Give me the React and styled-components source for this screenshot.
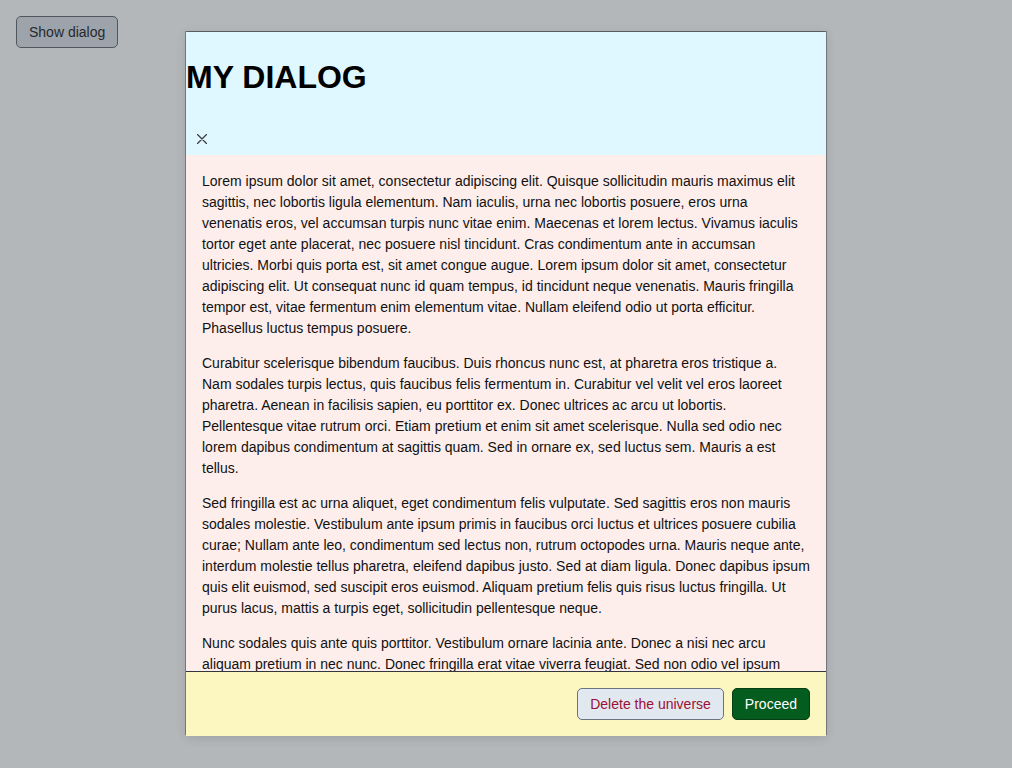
import styled, { createGlobalStyle } from "styled-components";

const GlobalStyle = createGlobalStyle`
  html, body {
    margin: 0;
    padding: 0;
    height: 100%;
  }
  body {
    font-family: "Liberation Sans", Arial, sans-serif;
    background: #b4b7ba;
  }
`;

const paragraphs = [
  "Lorem ipsum dolor sit amet, consectetur adipiscing elit. Quisque sollicitudin mauris maximus elit sagittis, nec lobortis ligula elementum. Nam iaculis, urna nec lobortis posuere, eros urna venenatis eros, vel accumsan turpis nunc vitae enim. Maecenas et lorem lectus. Vivamus iaculis tortor eget ante placerat, nec posuere nisl tincidunt. Cras condimentum ante in accumsan ultricies. Morbi quis porta est, sit amet congue augue. Lorem ipsum dolor sit amet, consectetur adipiscing elit. Ut consequat nunc id quam tempus, id tincidunt neque venenatis. Mauris fringilla tempor est, vitae fermentum enim elementum vitae. Nullam eleifend odio ut porta efficitur. Phasellus luctus tempus posuere.",
  "Curabitur scelerisque bibendum faucibus. Duis rhoncus nunc est, at pharetra eros tristique a. Nam sodales turpis lectus, quis faucibus felis fermentum in. Curabitur vel velit vel eros laoreet pharetra. Aenean in facilisis sapien, eu porttitor ex. Donec ultrices ac arcu ut lobortis. Pellentesque vitae rutrum orci. Etiam pretium et enim sit amet scelerisque. Nulla sed odio nec lorem dapibus condimentum at sagittis quam. Sed in ornare ex, sed luctus sem. Mauris a est tellus.",
  "Sed fringilla est ac urna aliquet, eget condimentum felis vulputate. Sed sagittis eros non mauris sodales molestie. Vestibulum ante ipsum primis in faucibus orci luctus et ultrices posuere cubilia curae; Nullam ante leo, condimentum sed lectus non, rutrum octopodes urna. Mauris neque ante, interdum molestie tellus pharetra, eleifend dapibus justo. Sed at diam ligula. Donec dapibus ipsum quis elit euismod, sed suscipit eros euismod. Aliquam pretium felis quis risus luctus fringilla. Ut purus lacus, mattis a turpis eget, sollicitudin pellentesque neque.",
  "Nunc sodales quis ante quis porttitor. Vestibulum ornare lacinia ante. Donec a nisi nec arcu aliquam pretium in nec nunc. Donec fringilla erat vitae viverra feugiat. Sed non odio vel ipsum tempus luctus. Integer at sapien vitae sem tincidunt commodo. Proin faucibus ligula nec lacus dictum, id fermentum erat vehicula.",
];

export default function App() {
  return (
    <>
      <GlobalStyle />
      <Page>
        <TriggerButton>Show dialog</TriggerButton>
      </Page>
      <Overlay>
        <Dialog>
          <Header>
            <Title>MY DIALOG</Title>
            <CloseButton aria-label="Close">
              <svg width="10" height="10" viewBox="0 0 10 10">
                <path
                  d="M0.5 0.5 L9.5 9.5 M9.5 0.5 L0.5 9.5"
                  stroke="#3a3d42"
                  strokeWidth="1.3"
                  strokeLinecap="round"
                />
              </svg>
            </CloseButton>
          </Header>
          <Body>
            {paragraphs.map((p, i) => (
              <p key={i}>{p}</p>
            ))}
          </Body>
          <Footer>
            <Button $variant="danger">Delete the universe</Button>
            <Button $variant="primary">Proceed</Button>
          </Footer>
        </Dialog>
      </Overlay>
    </>
  );
}

const Page = styled.main`
  min-height: 100vh;
  padding: 16px;
  box-sizing: border-box;
`;

const TriggerButton = styled.button`
  height: 32px;
  padding: 0 12px;
  font-family: "Liberation Sans", Arial, sans-serif;
  font-size: 14px;
  color: #25292e;
  background: #9da3ab;
  border: 1px solid #51565d;
  border-radius: 5px;
`;

const Overlay = styled.div`
  position: fixed;
  inset: 0;
  display: flex;
  align-items: center;
  justify-content: center;
`;

const Dialog = styled.div`
  width: 640px;
  height: 704px;
  display: flex;
  flex-direction: column;
  box-shadow: -1px -1px 0 rgba(60, 64, 70, 0.5), 1px -1px 0 rgba(60, 64, 70, 0.5),
    0 2px 10px rgba(0, 0, 0, 0.12);
`;

const Header = styled.header`
  background: #dff7ff;
  display: flex;
  flex-direction: column;
  align-items: flex-start;
  height: 123px;
  flex-shrink: 0;
`;

const Title = styled.h1`
  margin: 27px 0 0;
  font-size: 32px;
  font-weight: 700;
  color: #000;
  line-height: 37px;
`;

const CloseButton = styled.button`
  margin-top: auto;
  width: 32px;
  height: 32px;
  display: flex;
  align-items: center;
  justify-content: center;
  padding: 0;
  background: transparent;
  border: none;
`;

const Body = styled.div`
  flex: 1;
  min-height: 0;
  overflow: hidden;
  background: #fdeeec;
  padding: 16px 16px 0;
  font-size: 14px;
  line-height: 21px;
  color: #111;

  p {
    margin: 0 0 14px;
  }
`;

const Footer = styled.footer`
  flex-shrink: 0;
  height: 65px;
  box-sizing: border-box;
  background: #fcf6c0;
  border-top: 1px solid #33363b;
  display: flex;
  align-items: center;
  justify-content: flex-end;
  gap: 8px;
  padding: 0 16px;
`;

const Button = styled.button`
  height: 32px;
  padding: 0 12px;
  font-family: "Liberation Sans", Arial, sans-serif;
  font-size: 14px;
  border-radius: 5px;
  border: 1px solid ${(p) => (p.$variant === "primary" ? "#0a3d14" : "#6b7280")};
  background: ${(p) => (p.$variant === "primary" ? "#045c1f" : "#e2e8f0")};
  color: ${(p) => (p.$variant === "primary" ? "#ffffff" : "#9b1035")};
`;
